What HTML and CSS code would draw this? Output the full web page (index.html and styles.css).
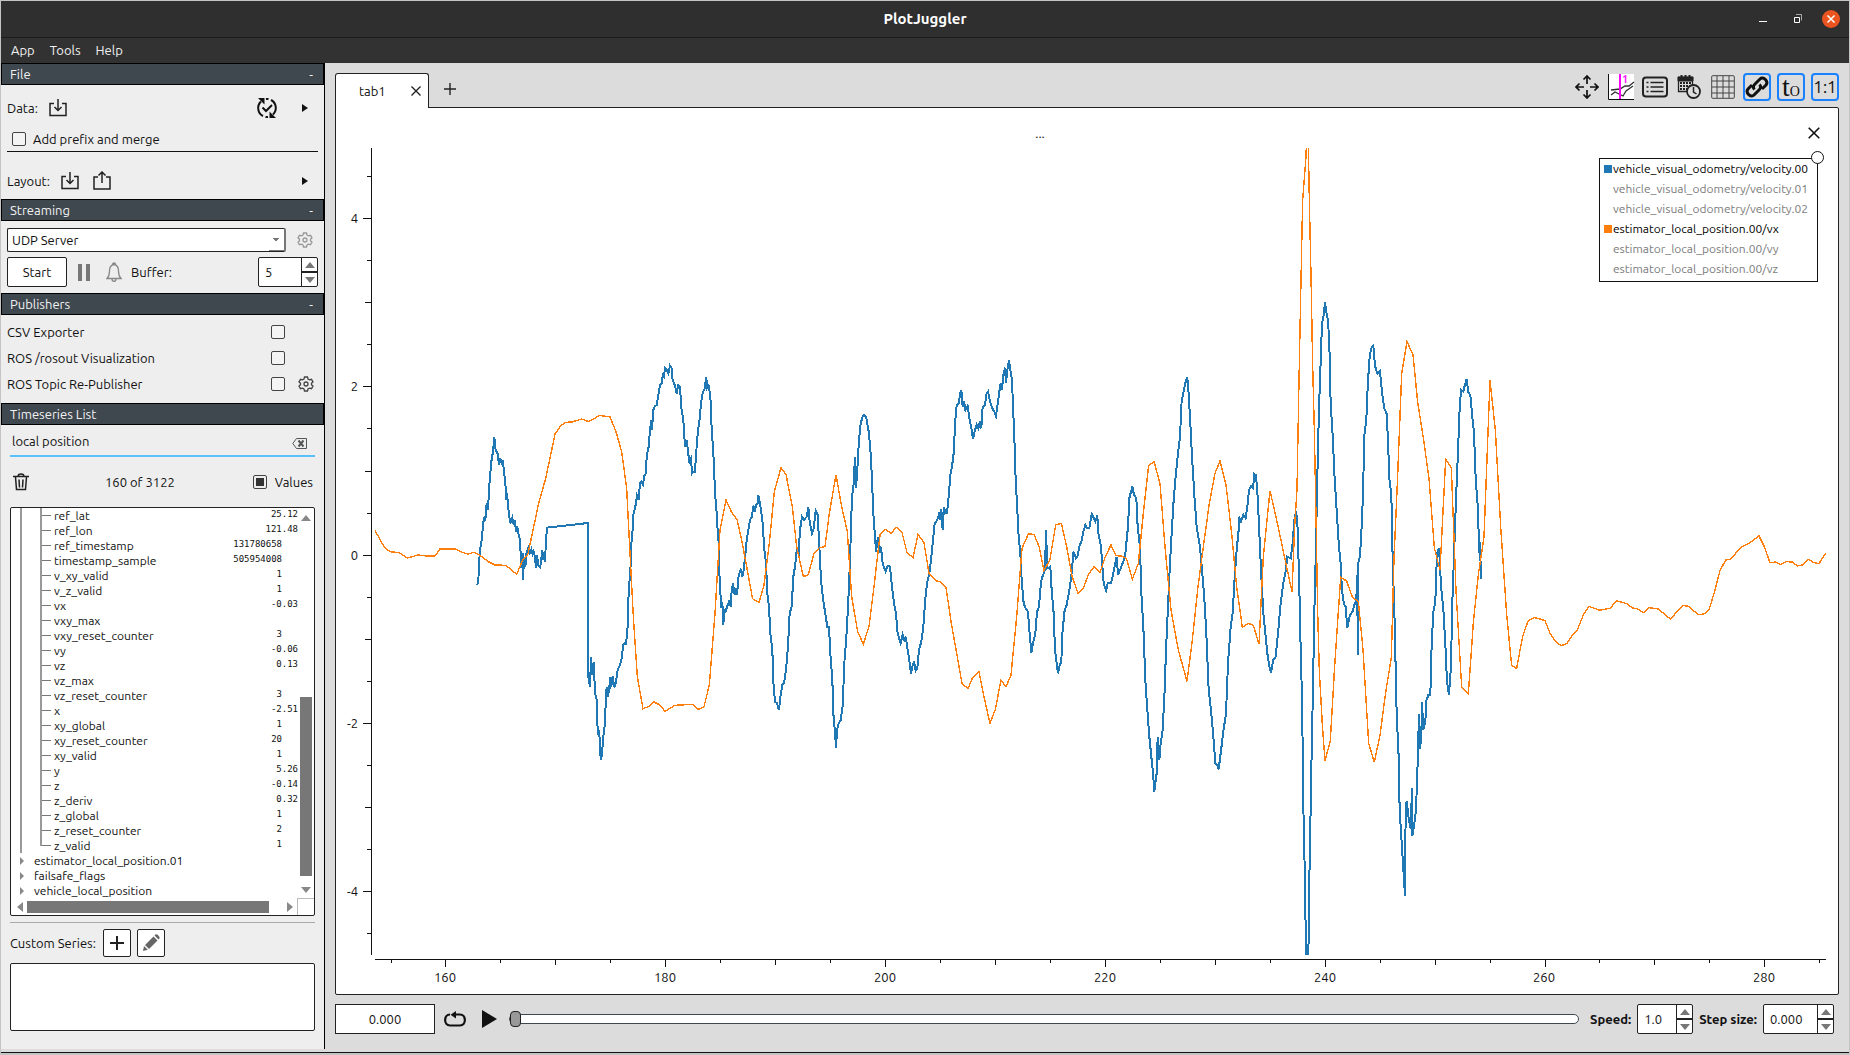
FILE: index.html
```html
<!DOCTYPE html>
<html lang="en">
<head>
<meta charset="utf-8">
<title>PlotJuggler</title>
<link rel="stylesheet" href="styles.css">
</head>
<body>
<div class="window">
  <header class="titlebar">
    <h1 class="title">PlotJuggler</h1>
    <div class="window-buttons">
      <button class="wbtn" aria-label="Minimize"><svg width="18" height="18"><path d="M5 11.5h8" stroke="#fff"/></svg></button>
      <button class="wbtn" aria-label="Restore"><svg width="18" height="18" fill="none"><path d="M8 4.500h5.500v6" stroke="#aaa"/><path d="M6.500 7.500h5v5h-5z" stroke="#fff"/></svg></button>
      <button class="wbtn wclose" aria-label="Close"><svg width="18" height="18"><path d="M5.500 5.500l7 7M12.500 5.500l-7 7" stroke="#fff" stroke-width="1.500"/></svg></button>
    </div>
  </header>
  <nav class="menubar">
    <button class="menu">App</button>
    <button class="menu">Tools</button>
    <button class="menu">Help</button>
  </nav>

  <div class="body">
    <aside class="sidebar">
      <h2 class="head">File<span class="fold">-</span></h2>
      <section class="sec file">
        <div class="row data-row">
          <span>Data:</span>
          <button class="icon" aria-label="Load data"><svg width="18" height="18" fill="none" stroke="#222" stroke-width="1.500"><path d="M5 4.500H1v12h16v-12h-4M9 0v11M5.500 8L9 11.500 12.500 8"/></svg></button>
          <button class="icon push" aria-label="Reload data"><svg width="22" height="22" fill="none" stroke="#111" stroke-width="2"><path d="M7 19A9 9 0 0 1 5 4.500M15 3a9 9 0 0 1 2 14.500M9.500 20a9 9 0 0 0 2.500 0M12.500 2a9 9 0 0 0-2.500 0"/><path d="M6.500 10.500l3.500 3.500 6-6"/><path d="M2 1h6.500v6.500zM20 21h-6.500v-6.500z" fill="#111" stroke="none"/></svg></button>
          <button class="icon more" aria-label="Data history"><svg width="6" height="10"><path d="M0 1l6 4-6 4z" fill="#111"/></svg></button>
        </div>
        <div class="row prefix-row">
          <input type="checkbox" id="prefix"><label for="prefix">Add prefix and merge</label>
        </div>
        <div class="row layout-row">
          <span>Layout:</span>
          <button class="icon" aria-label="Load layout"><svg width="18" height="18" fill="none" stroke="#222" stroke-width="1.500"><path d="M5 4.500H1v12h16v-12h-4M9 0v11M5.500 8L9 11.500 12.500 8"/></svg></button>
          <button class="icon save" aria-label="Save layout"><svg width="18" height="19" fill="none" stroke="#222" stroke-width="1.500"><path d="M5 6H1v12h16V6h-4M9 12V1M5.500 4.500L9 1l3.500 3.500"/></svg></button>
          <button class="icon more push" aria-label="Layout history"><svg width="6" height="10"><path d="M0 1l6 4-6 4z" fill="#111"/></svg></button>
        </div>
      </section>

      <h2 class="head">Streaming<span class="fold">-</span></h2>
      <section class="sec streaming">
        <div class="row">
          <select class="combo" aria-label="Streaming source"><option>UDP Server</option></select>
          <button class="icon gear" aria-label="Streaming options"><svg width="16" height="16" fill="none" stroke="#999" stroke-width="1.300"><path d="M6.500 1h3l.5 2 1.500.9 2-.6 1.500 2.500L13.500 7.200v1.600L15 10.200l-1.500 2.500-2-.6-1.500.9-.5 2h-3l-.5-2-1.500-.9-2 .6L1 10.200l1.500-1.400V7.200L1 5.800l1.500-2.500 2 .6L6 3z"/><circle cx="8" cy="8" r="2"/></svg></button>
        </div>
        <div class="row controls">
          <button class="btn start">Start</button>
          <button class="icon pause" aria-label="Pause"><svg width="12" height="17"><path d="M0 0h4v17H0zM8 0h4v17H8z" fill="#777"/></svg></button>
          <button class="icon bell" aria-label="Notifications"><svg width="16" height="20" fill="none" stroke="#888" stroke-width="1.300"><path d="M1 16.500c2-2 2.500-3 2.500-7.500C3.500 5 5 3 8 2.500c3 .5 4.500 2.500 4.500 6.500 0 4.500.5 5.500 2.500 7.500zM6.500 2.500a1.500 1.500 0 0 1 3 0M6 17c0 3 4 3 4 0"/></svg></button>
          <label for="buffer">Buffer:</label>
          <span class="spin spin-buffer"><input id="buffer" type="number" value="5"><span class="arrows"><button aria-label="Increase buffer"></button><button aria-label="Decrease buffer"></button></span></span>
        </div>
      </section>

      <h2 class="head">Publishers<span class="fold">-</span></h2>
      <section class="sec publishers">
        <div class="row"><label for="csv">CSV Exporter</label><input type="checkbox" id="csv"></div>
        <div class="row"><label for="rosout">ROS /rosout Visualization</label><input type="checkbox" id="rosout"></div>
        <div class="row"><label for="repub">ROS Topic Re-Publisher</label><input type="checkbox" id="repub">
          <button class="icon gear" aria-label="Publisher options"><svg width="16" height="16" fill="none" stroke="#444" stroke-width="1.300"><path d="M6.500 1h3l.5 2 1.500.9 2-.6 1.500 2.500L13.500 7.200v1.600L15 10.200l-1.500 2.500-2-.6-1.500.9-.5 2h-3l-.5-2-1.500-.9-2 .6L1 10.200l1.500-1.400V7.200L1 5.800l1.500-2.500 2 .6L6 3z"/><circle cx="8" cy="8" r="2"/></svg></button></div>
      </section>

      <h2 class="head">Timeseries List</h2>
      <section class="sec series">
        <div class="row filter">
          <input type="text" value="local position" aria-label="Filter series">
          <button class="icon" aria-label="Clear filter"><svg width="15" height="11" fill="none" stroke="#555"><path d="M4.500.5h10v10h-10L.8 5.500z"/><path d="M6.500 2.500l5 6M11.500 2.500l-5 6" stroke-width="2"/></svg></button>
        </div>
        <div class="row summary">
          <button class="icon" aria-label="Delete series"><svg width="16" height="18" fill="none" stroke="#222" stroke-width="1.500"><path d="M0 3.500h16M5 3.500c0-3.500 6-3.500 6 0M2.500 4l1 12.500h9L13.500 4M6 6.500l.5 8M10 6.500l-.5 8"/></svg></button>
          <span class="count">160 of 3122</span>
          <input type="checkbox" id="values" class="partial" checked><label for="values">Values</label>
        </div>
        <div class="tree">
          <div class="tree-main">
            <table class="items">
              <tbody>
              <tr><th>ref_lat</th><td>25.12</td></tr>
              <tr><th>ref_lon</th><td>121.48</td></tr>
              <tr><th>ref_timestamp</th><td class="int">131780658</td></tr>
              <tr><th>timestamp_sample</th><td class="int">505954008</td></tr>
              <tr><th>v_xy_valid</th><td class="int">1</td></tr>
              <tr><th>v_z_valid</th><td class="int">1</td></tr>
              <tr><th>vx</th><td>-0.03</td></tr>
              <tr><th>vxy_max</th><td></td></tr>
              <tr><th>vxy_reset_counter</th><td class="int">3</td></tr>
              <tr><th>vy</th><td>-0.06</td></tr>
              <tr><th>vz</th><td>0.13</td></tr>
              <tr><th>vz_max</th><td></td></tr>
              <tr><th>vz_reset_counter</th><td class="int">3</td></tr>
              <tr><th>x</th><td>-2.51</td></tr>
              <tr><th>xy_global</th><td class="int">1</td></tr>
              <tr><th>xy_reset_counter</th><td class="int">20</td></tr>
              <tr><th>xy_valid</th><td class="int">1</td></tr>
              <tr><th>y</th><td>5.26</td></tr>
              <tr><th>z</th><td>-0.14</td></tr>
              <tr><th>z_deriv</th><td>0.32</td></tr>
              <tr><th>z_global</th><td class="int">1</td></tr>
              <tr><th>z_reset_counter</th><td class="int">2</td></tr>
              <tr class="last"><th>z_valid</th><td class="int">1</td></tr>
              </tbody>
              <tbody class="groups">
              <tr><th colspan="2">estimator_local_position.01</th></tr>
              <tr><th colspan="2">failsafe_flags</th></tr>
              <tr><th colspan="2">vehicle_local_position</th></tr>
              </tbody>
            </table>
            <div class="vbar"><i class="up"></i><div class="vtrack"><div class="vthumb"></div></div><i class="down"></i></div>
          </div>
          <div class="hbar"><i class="left"></i><div class="htrack"><div class="hthumb"></div></div><i class="right"></i><div class="corner"></div></div>
        </div>
        <div class="row custom">
          <span>Custom Series:</span>
          <button class="btn square" aria-label="Add custom series"><svg width="14" height="14"><path d="M7 0v14M0 7h14" stroke="#222" stroke-width="2"/></svg></button>
          <button class="btn square" aria-label="Edit custom series"><svg width="18" height="18" fill="#666"><path d="M1 17l1-5 3.800 3.800zM3 11l8.500-8.500 4 4L7 15zM12.500 1.500l1-1c1.500-1 5 2.500 4 4l-1 1z"/></svg></button>
        </div>
        <div class="custom-list"></div>
      </section>
    </aside>

    <main class="main">
      <div class="tabbar">
        <div class="tab"><span>tab1</span><button class="icon" aria-label="Close tab"><svg width="10" height="10"><path d="M.5.5l9 9M9.500.5l-9 9" stroke="#222" stroke-width="1.400"/></svg></button></div>
        <button class="icon newtab" aria-label="New tab"><svg width="12" height="12"><path d="M6 0v12M0 6h12" stroke="#222" stroke-width="1.400"/></svg></button>
        <div class="tools">
          <button class="tool" aria-label="Zoom out"><svg width="24" height="24" fill="none" stroke="#111" stroke-width="2"><path d="M12 9V1.500M12 15v7.500M9 12H1.500M15 12h7.500M8.500 4.500L12 1l3.500 3.500M8.500 19.500L12 23l3.500-3.500M4.500 8.500L1 12l3.500 3.500M19.500 8.500L23 12l-3.500 3.500" stroke-width="1.700"/></svg></button>
          <button class="tool" aria-label="Tracker"><svg width="28" height="28" fill="none"><path d="M1 1h26v26H1z" fill="#fff"/><path d="M1.500 1v25.500H27" stroke="#111"/><path d="M4 17l9-1 5-3h4l5-4M4 22l4-3 8 4 3-5 7-5" stroke="#333" stroke-width="1.300"/><path d="M13 1v25" stroke="#f0f" stroke-width="2"/><text x="15" y="10" font-size="11" font-weight="700" fill="#f2f">1</text></svg></button>
          <button class="tool" aria-label="Legend"><svg width="26" height="22" fill="none" stroke="#222"><rect x="1" y="1.500" width="24" height="19" rx="3" stroke-width="2"/><path d="M8.500 6.500h13M8.500 11h13M8.500 15.500h13M4.500 6.500h2M4.500 11h2M4.500 15.500h2" stroke-width="1.600"/></svg></button>
          <button class="tool" aria-label="Date and time"><svg width="26" height="26" fill="none" stroke="#222"><path d="M2.500 3.500h14v14h-14z" stroke-width="1.300"/><path d="M2 3h15v4H2z" fill="#222"/><path d="M5.500 1v3M9.500 1v3M13.500 1v3" stroke-width="2"/><path d="M4 9h11M4 12h11M4 15h11" stroke-width="2" stroke-dasharray="2 1"/><circle cx="17.500" cy="17.500" r="6.500" fill="#ddd" stroke-width="1.800"/><path d="M17.500 13v5l3 2" stroke-width="1.500"/></svg></button>
          <button class="tool" aria-label="Grid"><svg width="24" height="24" fill="none" stroke="#444"><rect x=".7" y=".7" width="22.600" height="22.600" rx="1"/><path d="M6 1v22M12 1v22M18 1v22M1 6h22M1 12h22M1 18h22"/></svg></button>
          <button class="tool on" aria-label="Link axes"><svg width="24" height="24" fill="none" stroke="#111" stroke-width="3"><path d="M9.500 14.500C7 12 9 10 10 9l5-5c3-3 9 2 6 6l-4 4M14.500 9.500C17 12 15 14 14 15l-5 5c-3 3-9-2-6-6l4-4"/></svg></button>
          <button class="tool on serif" aria-label="Remove time offset"><span>t</span><sub>O</sub></button>
          <button class="tool on ratio" aria-label="Keep ratio">1:1</button>
        </div>
      </div>

      <div class="panel">
        <div class="plot-title">...</div>
        <button class="icon plot-close" aria-label="Close plot"><svg width="12" height="12"><path d="M.7.7l10.600 10.600M11.300.7L.7 11.300" stroke="#111" stroke-width="1.600"/></svg></button>
        <svg class="plot" viewBox="336 108 1502 886">
          <!-- axes -->
          <g class="axis">
            <path d="M371.500 148v807M375 959.500h1451"/>
            <path d="M363 218.500h8M363 386.500h8M363 555.500h8M363 723.500h8M363 891.500h8"/>
            <path d="M365 302.500h6M365 471.500h6M365 639.500h6M365 807.500h6"/>
            <path d="M367 176.500h4M367 260.500h4M367 344.500h4M367 428.500h4M367 513.500h4M367 597.500h4M367 681.500h4M367 765.500h4M367 849.500h4M367 933.500h4"/>
            <path d="M445.500 960v7M665.500 960v7M885.500 960v7M1105.500 960v7M1325.500 960v7M1545.500 960v7M1764.500 960v7"/>
            <path d="M555.500 960v5M775.500 960v5M995.500 960v5M1215.500 960v5M1435.500 960v5M1654.500 960v5"/>
            <path d="M391.500 960v3M500.500 960v3M610.500 960v3M720.500 960v3M830.500 960v3M940.500 960v3M1050.500 960v3M1160.500 960v3M1270.500 960v3M1380.500 960v3M1490.500 960v3M1599.500 960v3M1709.500 960v3M1819.500 960v3"/>
          </g>
          <g class="labels yl">
            <text x="358" y="223">4</text><text x="358" y="391">2</text><text x="358" y="560">0</text><text x="358" y="728">-2</text><text x="358" y="896">-4</text>
          </g>
          <g class="labels xl">
            <text x="445" y="982">160</text><text x="665" y="982">180</text><text x="885" y="982">200</text><text x="1105" y="982">220</text><text x="1325" y="982">240</text><text x="1544" y="982">260</text><text x="1764" y="982">280</text>
          </g>
          <!-- curves, drawn on a grid three times finer than the axes -->
          <svg x="372" y="148" width="1454" height="807" viewBox="1116 444 4362 2421">
            <g class="curve blue">
              <g transform="translate(1080 1050)"><polyline points="351,705 355,695 357,640 360,600 366,565 369,520 373,505 376,512 380,460 384,480 387,420 390,380 394,335 399,305 403,262 407,300 413,312 417,345 421,325 426,345 428,330 432,365 436,400 439,450 441,430 446,485 451,520 457,503 461,525 464,510 468,545 472,530 476,555 480,570 484,655 488,610 489,690 492,625 496,650 500,605 504,600 506,587 510,608 514,598 518,612 521,605 525,620 528,655 531,615 535,645 540,652 543,640 546,600 550,630 553,605 555,635 558,570 561,533 684,519 685,980 690,1012 693,920 697,975 701,935 704,1005 707,1040 711,1050 713,1150 718,1145 720,1205 723,1230 726,1210 730,1160 735,1120 737,1060 740,1010 743,1040 746,1005 748,1030 750,980 754,1010 758,978 763,1012 767,1000 773,960 780,945 786,920 789,885 794,880 797,882 800,865 803,830 805,750 808,700 811,665 814,580 817,555 820,495 826,470 831,437 836,450 840,400 845,395 849,403 853,378 858,370 860,320 866,290 870,240 874,210 876,240 880,180 885,168 890,165 895,135 900,105 906,100 908,75 912,80 915,55 920,60 925,70 930,47 935,55 937,85 940,95 946,110 950,130 955,105 960,110 964,175 970,210 975,290 980,270 984,305 988,335 993,325 996,370 1000,365 1005,365 1008,315 1014,240 1018,215 1023,160 1028,130 1034,115 1039,80 1041,115 1046,108 1050,130 1053,170 1055,240 1059,290 1062,350 1065,430 1069,475 1073,540 1076,580 1078,670 1081,720 1083,775 1087,755 1090,825 1093,780 1097,785 1101,770 1107,755 1112,770 1115,720 1119,700 1124,735 1127,715 1131,735 1136,675 1142,660 1147,680"/></g>
              <g transform="translate(2220 1020)"><polyline points="7,710 11,690 15,655 20,600 25,570 30,540 36,530 40,497 45,515 48,495 53,490 55,465 60,490 65,525 69,560 72,620 78,670 82,760 87,800 91,880 97,930 100,1025 105,1085 111,1090 117,1110 121,1070 127,1035 132,1030 138,990 144,920 149,820 155,800 160,710 165,680 170,630 176,640 180,570 186,530 192,540 200,530 205,502 209,545 216,580 221,565 227,512 233,525 238,620 243,720 249,775 255,815 262,860 267,860 271,940 277,1020 281,1140 285,1175 288,1225 291,1170 296,1150 302,1140 309,1090 312,980 317,920 321,860 326,760 330,660 334,530 336,470 341,430 345,350 348,445 353,370 357,300 362,250 368,230 373,225 378,230 381,245 387,280 392,340 396,420 400,520 405,590 408,635 414,590 418,640 423,620 428,670 437,695 443,677 450,680 456,740 462,790 468,820 473,880 482,910 488,885 494,905 497,890 503,930 508,960 513,1003 517,980 522,965 527,992 532,985 537,930 544,905 550,860 556,775 562,725 568,700 573,660 579,600 584,550 592,540 598,518 601,540 604,508 608,570 612,500 616,520 621,520 627,460 631,405 636,380 641,340 646,240 650,195 657,190 660,160 664,150 668,200 672,183 676,210 683,198 688,235 695,270 699,297 705,270 710,255 715,265 720,245 724,265 728,200 735,195 740,160 744,155 750,185 757,205 763,215 768,228 772,200 778,155 782,130 786,150 790,105 795,83 798,130 802,90 807,60 811,90 816,120 819,200 823,290 827,420 832,510 836,590 841,640 845,720 851,790 857,805 864,815 868,870 874,938 880,905 886,880 891,815 897,800 903,725 909,705 915,690 918,570 922,685 931,680 935,750 941,820 945,930 950,970 954,1000 958,980 964,965 967,880 974,810 980,795 990,740 996,690 1000,635 1008,655 1012,650 1018,620 1024,605 1030,575 1036,555 1042,565 1048,565 1055,522 1062,535 1066,545 1072,527 1075,580 1083,620 1088,690 1091,730 1098,752 1103,730 1113,730 1120,700 1130,650 1134,705"/></g>
              <g transform="translate(3300 1020)"><polyline points="54,705 60,690 66,675 75,650 79,610 84,560 88,475 93,455 97,440 102,465 109,475 113,560 120,620 124,760 130,860 136,1020 142,1110 148,1190 154,1250 159,1300 163,1355 170,1300 173,1190 178,1260 182,1210 188,1170 194,1050 198,930 204,800 209,690 215,580 221,480 227,410 233,350 240,290 245,180 250,160 257,125 262,113 266,160 271,250 276,350 284,480 290,560 300,620 306,690 312,760 319,880 326,1050 333,1110 340,1190 346,1270 352,1275 356,1288 362,1240 370,1175 378,1120 384,970 392,860 398,820 403,730 409,640 416,570 417,530 423,545 430,525 437,535 442,500 447,450 453,438 459,445 463,402 468,405 473,470 478,580 483,690 490,820 496,880 502,940 508,980 513,997 520,960 527,950 534,880 542,790 549,735 556,700 562,650 572,655 578,610 583,540 588,515"/></g>
              <g transform="translate(3780 390) scale(1 1.607)"><polyline points="108,712 112,730 116,810 119,880 122,970 126,1060 129,1200 131,1300 135,1400 138,1545 145,1545 148,1400 151,1300 155,1160 159,1040 163,900 167,800 170,710 173,620 177,520 181,450 186,360 190,350 195,322 199,340 204,355 208,400 212,510 218,570 223,640 230,710 236,770 242,810 246,860 252,885 257,890 262,930 270,905 277,900 284,885 289,880 291,830 294,980 294,810 300,795 305,740 309,680 313,570 319,540 323,480 328,430 333,408 340,403 345,440 352,455 360,450 366,490 373,520 380,530 384,580 388,650 394,680 398,800 404,920 410,1090 416,1170 419,1270 425,1330 430,1380 435,1430 437,1270 440,1252 446,1285 452,1305 456,1228 457,1318 463,1295 468,1270 473,1180 477,1090 480,1155 484,1130 486,1068 490,1120 496,1105 499,1065 505,1055 511,1055 515,960 520,900 526,880 531,790 537,780 543,850 550,895 556,960 561,1030 567,1055 573,1000 577,880 583,780 588,690 594,600 599,520 603,485 610,488 615,475 620,465 625,490 631,495 636,530 642,565 647,650 653,700 658,790 660,770 663,838"/></g>
            </g>
            <g class="curve orange">
              <g transform="translate(1080 1050)"><polyline points="45,542 60,568 73,592 90,605 118,608 142,624 175,615 200,618 225,618 240,597 285,597 310,608 325,612 342,607 357,614 385,635 405,645 438,646 470,673 488,630 504,612 518,545 536,460 557,385 570,325 585,252 600,230 615,217 636,216 665,207 686,215 705,205 718,196 750,201 768,245 785,305 800,415 810,610 820,800 832,980 849,1076 865,1070 882,1056 900,1065 915,1084 945,1066 997,1063 1015,1078 1032,1070 1048,1005 1065,790 1080,540 1098,450 1115,487 1131,508 1147,580 1160,650 1178,748"/></g>
              <g transform="translate(2220 1020)"><polyline points="38,778 57,787 72,735 88,610 103,455 123,383 138,403 157,500 170,620 190,710 205,704 222,640 238,623 255,620 268,520 288,404 305,500 322,575 335,770 353,875 370,912 387,860 402,740 420,585 436,568 453,580 469,562 486,577 501,637 519,653 534,583 552,608 567,700 587,722 602,726 618,742 634,850 650,940 666,1030 684,1046 698,1012 717,996 733,1075 750,1150 766,1108 783,1020 798,1040 813,1005 830,830 846,625 865,582 882,583 898,622 912,692 930,658 947,555 964,550 980,620 996,708 1014,760 1030,745 1046,702 1062,680 1080,697 1096,650 1113,615 1128,647 1149,649 1160,658"/></g>
              <g transform="translate(3300 1020)"><polyline points="80,658 97,718 115,670 130,520 146,376 162,365 180,430 195,620 213,810 235,930 261,1024 277,900 294,740 310,620 328,490 345,400 360,363 378,435 395,580 410,740 427,862 445,850 460,856 477,912 490,650 510,452 530,540 576,756"/></g>
              <g transform="translate(3780 390) scale(1 1.607)"><polyline points="96,862 104,740 111,670 116,500 122,310 128,130 138,50 139,30 145,30 149,160 153,270 158,440 163,560 168,720 173,900 178,1010 187,1110 195,1178 211,1140 224,1000 242,835 260,842 277,872 295,880 309,970 326,1145 343,1180 360,1130 377,1050 394,985 402,800 412,660 425,455 441,395 459,420 473,508 490,575 507,650 523,780 540,822 557,615 574,630 588,860 605,1040 625,1053 640,920 655,830 672,760 690,467 706,560 722,740 740,905 755,1000 770,1005 788,945 804,917 822,910 840,913"/></g>
              <g transform="translate(4500 1500)"><polyline points="120,357 135,362 150,400 167,425 184,437 201,430 217,405 232,390 250,345 267,319 300,331 332,324 349,302 380,311 397,324 413,327 430,338 446,323 475,327 512,358 530,335 548,317 564,318 595,344 612,342 628,327 645,270 660,212 677,180 692,177 722,143 745,131 777,108 793,140 810,188 826,186 842,193 860,185 878,186 892,198 908,195 925,178 942,188 957,191 970,170 980,160"/></g>
            </g>
          </svg>
        </svg>
        <ul class="legend">
          <li class="on b">vehicle_visual_odometry/velocity.00</li>
          <li>vehicle_visual_odometry/velocity.01</li>
          <li>vehicle_visual_odometry/velocity.02</li>
          <li class="on o">estimator_local_position.00/vx</li>
          <li>estimator_local_position.00/vy</li>
          <li>estimator_local_position.00/vz</li>
        </ul>
      </div>

      <div class="playbar">
        <input class="time" type="text" value="0.000" aria-label="Current time">
        <button class="icon loop" aria-label="Loop"><svg width="22" height="16" fill="none" stroke="#111" stroke-width="2.200"><path d="M6 3.500C-.5 3.500-.5 14.500 6 14.500h10c6.500 0 6.500-11 0-11h-5"/><path d="M6.500 3.700L12 0v7.500z" fill="#111" stroke="none"/></svg></button>
        <button class="icon play" aria-label="Play"><svg width="15" height="18"><path d="M0 0l15 9-15 9z" fill="#111"/></svg></button>
        <input class="seek" type="range" min="0" max="100" value="0" aria-label="Playback position">
        <label class="strong" for="speed">Speed:</label>
        <span class="spin spin-speed"><input id="speed" type="text" value="1.0"><span class="arrows"><button aria-label="Increase speed"></button><button aria-label="Decrease speed"></button></span></span>
        <label class="strong" for="step">Step size:</label>
        <span class="spin spin-step"><input id="step" type="text" value="0.000"><span class="arrows"><button aria-label="Increase step"></button><button aria-label="Decrease step"></button></span></span>
      </div>
    </main>
  </div>
</div>
</body>
</html>
```
FILE: styles.css
```css
* { box-sizing: border-box; }
html, body { height: 100%; margin: 0; }
body {
  font: 13px/20px Ubuntu, "Noto Sans", sans-serif;
  color: #111;
  background: #c4c4c4;
}
button, input, select { font: inherit; color: inherit; margin: 0; }
button { padding: 0; border: 0; background: none; }
svg { display: block; }

.window {
  display: flex;
  flex-direction: column;
  min-height: 100vh;
  border: 1px solid #c4c4c4;
  border-bottom-width: 2px;
}

/* title bar and menu */
.titlebar {
  display: grid;
  grid-template-columns: 1fr auto 1fr;
  align-items: center;
  height: 37px;
  background: #302f2f;
  border-bottom: 1px solid #1c1c1c;
}
.title { grid-column: 2; margin: 0; font-size: 15px; line-height: 20px; color: #fff; font-weight: 700; }
.window-buttons { display: flex; gap: 16px; justify-content: flex-end; padding-right: 9px; }
.wbtn { width: 18px; height: 18px; border-radius: 50%; }
.wclose { background: #e95420; }
.menubar { display: flex; gap: 15px; height: 25px; padding: 0 0 2px 10px; background: #323232; color: #f0f0f0; }

.body { flex: 1; display: flex; background: #dcdcdc; border-bottom: 1px solid #111; }

/* sidebar */
.sidebar {
  display: flex;
  flex-direction: column;
  width: 324px;
  flex: none;
  margin-bottom: 3px;
  background: #eee;
  border-right: 1px solid #000;
}
.head {
  display: flex;
  justify-content: space-between;
  margin: 0;
  height: 22px;
  padding: 0 10px 0 8px;
  border: 1px solid #000;
  background: #3f474f;
  color: #f2f2f2;
  font-size: 13px;
  font-weight: 400;
  line-height: 20px;
}
.row { display: flex; align-items: center; }
.push { margin-left: auto; }
.file { height: 114px; padding: 0 6px; }
.data-row { height: 44px; padding: 2px 10px 0 0; }
.data-row .icon:first-of-type { margin-left: 11px; }
.data-row .more { margin-left: 24px; }
.prefix-row { height: 23px; padding: 0 0 3px 5px; gap: 7px; border-bottom: 1px solid #111; }
.layout-row { height: 47px; padding: 10px 10px 0 0; }
.layout-row .icon:first-of-type { margin-left: 11px; }
.layout-row .save { margin-left: 14px; }

input[type="checkbox"] {
  appearance: none;
  flex: none;
  width: 14px;
  height: 14px;
  border: 1px solid #444;
  border-radius: 2px;
  background: #f4f4f4;
}
input.partial { padding: 2px; background: #333 content-box; }

.btn { border: 1px solid #222; border-radius: 2px; background: #fff; }
.streaming { height: 72px; padding: 7px 6px 6px; }
.combo {
  appearance: none;
  width: 279px;
  height: 24px;
  padding: 0 4px;
  border: 1px solid #222;
  border-right: 2px solid #777;
  border-radius: 2px;
  background: linear-gradient(to bottom left, #777 50%, transparent 50%) 264px 9px / 4px 4px no-repeat,
              linear-gradient(to bottom right, #777 50%, transparent 50%) 268px 9px / 4px 4px no-repeat,
              linear-gradient(#777, #777) 100% 100% / 15px 1px no-repeat, #fff;
}
.streaming .gear { margin-left: 11px; }
.controls { margin-top: 5px; }
.start { width: 60px; height: 30px; }
.pause { margin-left: 11px; }
.bell { margin: 0 9px 0 16px; }
.spin { display: flex; height: 30px; border: 1px solid #222; border-radius: 2px; background: #fff; overflow: hidden; }
.spin input { flex: 1; min-width: 0; padding: 0 6px; border: 0; background: none; appearance: textfield; }
.spin input::-webkit-inner-spin-button { display: none; }
.arrows { display: flex; flex-direction: column; width: 16px; border-left: 1px solid #222; }
.arrows button { flex: 1; display: grid; place-items: center; }
.arrows button + button { border-top: 2px solid #222; }
.arrows button::before { content: ""; border: 5px solid transparent; border-top: 0; border-bottom: 6px solid #777; }
.arrows button + button::before { border-bottom: 0; border-top: 6px solid #777; }
.spin-buffer { width: 60px; margin-left: auto; }

.publishers { display: grid; grid-auto-rows: 26px; align-content: start; padding: 4px 6px 6px; height: 88px; }
.publishers label { width: 264px; }
.publishers .gear { margin-left: 13px; }

.series { flex: 1; display: flex; flex-direction: column; padding: 4px 9px 18px; }
.filter { height: 28px; padding-bottom: 2px; border-bottom: 2px solid #5bc0f8; }
.filter input { flex: 1; padding: 0 2px; border: 0; background: none; outline: 0; }
.filter .icon { margin: 4px 8px 0 0; }
.summary { height: 50px; padding-left: 3px; }
.count { flex: 1; padding-left: 76px; }
.summary label { margin: 0 2px 0 8px; }

/* series tree */
.tree { flex: 1; display: flex; flex-direction: column; border: 1px solid #222; border-radius: 2px; background: #fff; }
.tree-main { flex: 1; display: flex; }
.items { flex: 1; display: block; }
.items tbody { display: block; }
.items tr { display: flex; height: 15px; }
.items th { font-size: 12px; line-height: 15px; font-weight: 400; padding: 0; text-align: left; }
.items td { margin-left: auto; padding: 0; font: 9px/12px "DejaVu Sans Mono", monospace; }
.items .int { padding-right: 16px; }
.items tbody:first-child { margin-left: 9px; border-left: 2px solid #999; padding-left: 18px; }
.items tbody:first-child tr { border-left: 2px solid #999; }
.items tbody:first-child .last { border-image: linear-gradient(#999 8px, transparent 8px) 1; }
.items tbody:first-child th::before { content: ""; display: inline-block; width: 9px; height: 1px; margin-right: 3px; vertical-align: 4px; background: #777; }
.groups { padding-left: 9px; }
.groups th::before { content: ""; display: inline-block; margin-right: 10px; border: 4px solid transparent; border-left-color: #888; border-right: 0; }
.vbar { display: flex; flex-direction: column; align-items: center; width: 16px; padding: 7px 1px 5px 0; }
.vbar i, .hbar i { border: 5px solid transparent; }
.vbar .up { border-top: 0; border-bottom: 6px solid #888; }
.vbar .down { border-bottom: 0; border-top: 6px solid #888; }
.vtrack { flex: 1; width: 12px; display: flex; flex-direction: column; justify-content: flex-end; padding: 4px 0 11px; }
.vthumb { height: 51%; background: #777; }
.hbar { display: flex; align-items: center; height: 17px; }
.hbar .left { margin-left: 6px; border-left: 0; border-right: 6px solid #888; }
.hbar .right { border-right: 0; border-left: 6px solid #888; }
.htrack { flex: 1; padding: 0 18px 0 4px; }
.hthumb { height: 12px; background: #777; }
.corner { width: 17px; height: 17px; margin-left: 4px; border: 1px solid #bbb; border-width: 1px 0 0 1px; }
.custom { margin-top: 6px; height: 41px; border-top: 1px solid #aaa; gap: 6px; }
.custom span { margin-right: 1px; }
.square { width: 28px; height: 28px; display: grid; place-items: center; }
.custom-list { height: 68px; border: 1px solid #222; border-radius: 2px; background: #fff; }

/* tabs and toolbar */
.main { flex: 1; min-width: 0; display: flex; flex-direction: column; padding: 10px 10px 0 10px; }
.tabbar { display: flex; height: 34px; }
.tab {
  display: flex;
  align-items: center;
  justify-content: space-between;
  position: relative;
  z-index: 1;
  width: 94px;
  height: 35px;
  padding: 0 7px 0 23px;
  border: 1px solid #222;
  border-bottom: 0;
  border-radius: 3px 3px 0 0;
  background: #fff;
}
.newtab { align-self: flex-start; margin: 10px 0 0 15px; }
.tools { display: flex; gap: 6px; margin-left: auto; }
.tool { display: flex; align-items: center; justify-content: center; width: 28px; height: 28px; }
.tool.on { border: 2px solid #1a82ff; border-radius: 4px; }
.serif { font: 28px/24px "Liberation Serif", serif; }
.serif sub { font-size: 14px; line-height: 14px; align-self: flex-end; vertical-align: baseline; }
.ratio { font-size: 17px; }

/* plot */
.panel { flex: 1; position: relative; min-height: 0; border: 1px solid #222; border-radius: 0 2px 2px 2px; background: #fff; }
.plot { position: absolute; inset: 0; width: 100%; height: 100%; }
.plot-title { position: absolute; top: 15px; left: 0; right: 94px; text-align: center; }
.plot-close { position: absolute; top: 19px; right: 18px; z-index: 1; }
.axis path { fill: none; stroke: #111; shape-rendering: crispEdges; }
.labels { font-size: 13px; fill: #111; }
.yl { text-anchor: end; }
.xl { text-anchor: middle; }
.curve polyline { fill: none; vector-effect: non-scaling-stroke; shape-rendering: crispEdges; }
.blue polyline { stroke: #1f77b4; stroke-width: 2px; }
.orange polyline { stroke: #ff7f0e; stroke-width: 1.4px; }
.legend {
  position: absolute;
  top: 50px;
  right: 20px;
  width: 219px;
  margin: 0;
  padding: 0 0 2px 13px;
  border: 1px solid #111;
  background: #fff;
  list-style: none;
  font-size: 12px;
  line-height: 20px;
  color: #7c7c7c;
}
.legend::after { content: ""; position: absolute; top: -8px; right: -7px; width: 11px; height: 11px; border: 1px solid #111; border-radius: 50%; background: #fff; }
.legend .on { color: #000; }
.legend .on::before { content: ""; float: left; width: 8px; height: 8px; margin: 6px 0 0 -9px; }
.legend .b::before { background: #1f77b4; }
.legend .o::before { background: #ff7f0e; }

/* playback */
.playbar { display: flex; align-items: center; height: 57px; padding: 0 5px 9px 0; }
.time { width: 100px; height: 30px; border: 1px solid #222; background: #fff; text-align: center; }
.loop { margin: 0 16px 0 9px; }
.seek { appearance: none; flex: 1; min-width: 0; height: 10px; margin: 0 11px 0 12px; border: 1px solid #3f474f; border-radius: 5px; background: #fff; }
.seek::-webkit-slider-thumb { appearance: none; width: 11px; height: 16px; border: 1px solid #222; border-radius: 4px; background: #999; }
.strong { font-weight: 700; }
.spin-speed { width: 56px; margin: 0 6px; }
.spin-step { width: 71px; margin-left: 6px; }
```
